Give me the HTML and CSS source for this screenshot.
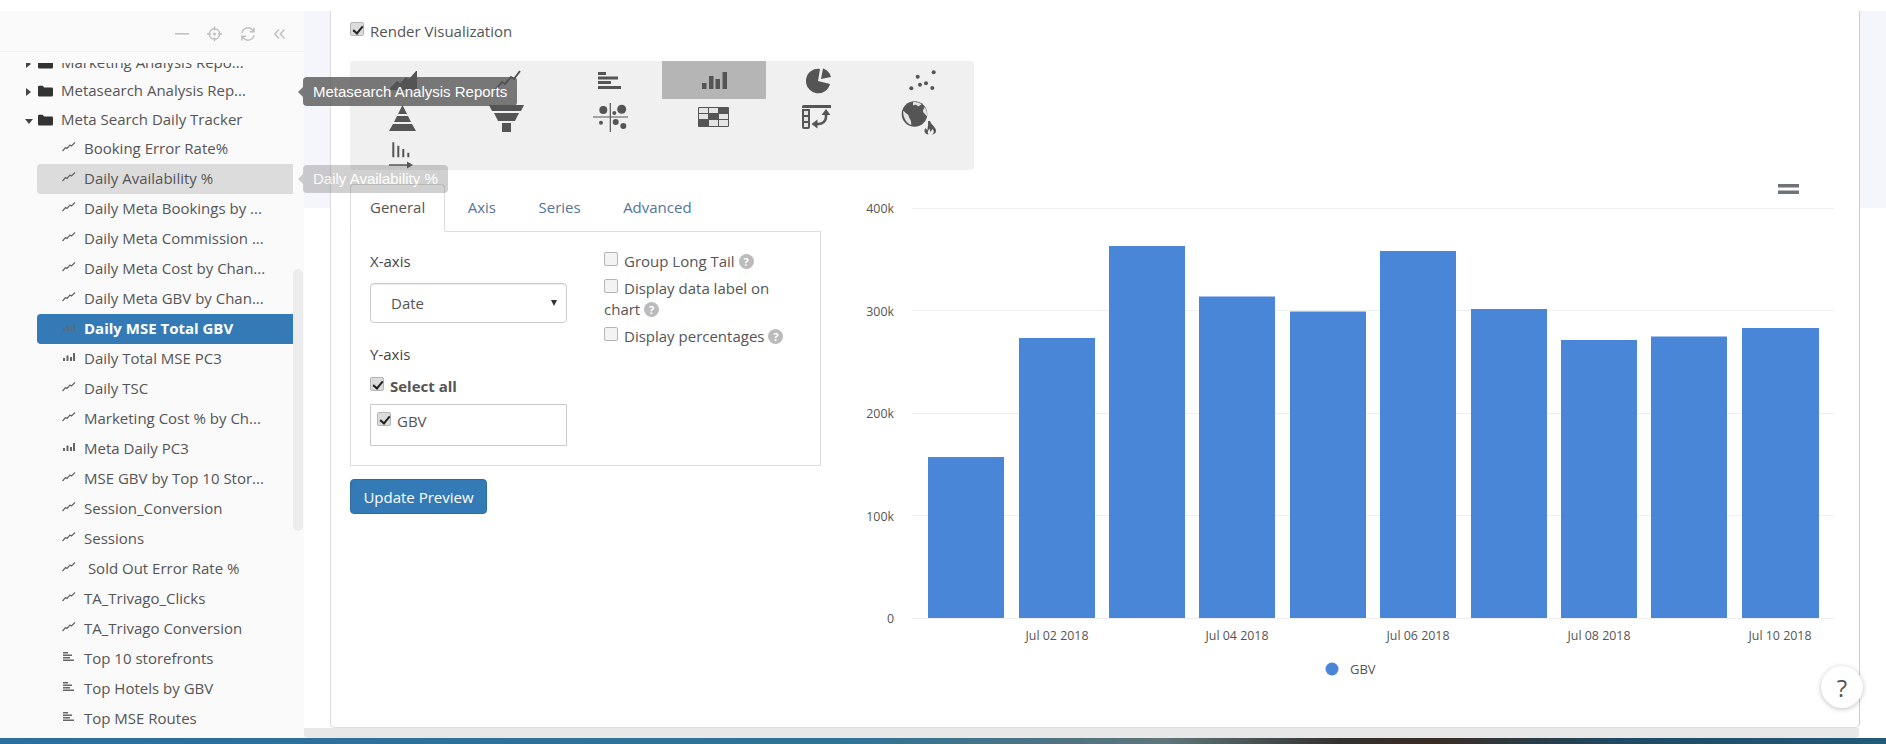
FILE: index.html
```html
<!DOCTYPE html>
<html lang="en">
<head>
  <meta charset="UTF-8">
  <title>Chart Editor</title>
  <link rel="stylesheet" href="styles.css">
</head>
<body>
  <svg class="defs" width="0" height="0">
    <symbol id="i-line" viewBox="0 0 14 10"><polyline points="0.5,9 3.5,5.5 5,6.5 8,3 9.5,4 13,0.5" fill="none" stroke="#666" stroke-width="1.2"/></symbol>
    <symbol id="i-bar" viewBox="0 0 14 10"><path d="M1 6h2v3H1zM4.500 3.500h2V9h-2zM8 5h2v4H8zM11 1h2v8h-2z" fill="#666"/></symbol>
    <symbol id="i-hbar" viewBox="0 0 14 10"><path d="M1 0h5v1.400H1zM1 2.500h9v1.400H1zM1 5h7v1.400H1zM1 7.500h11v1.400H1z" fill="#666"/></symbol>
    <symbol id="i-folder" viewBox="0 0 15 12"><path d="M0 2a1.300 1.300 0 0 1 1.300-1.300h3.400L6.200 2.400h7.500A1.300 1.300 0 0 1 15 3.700v6.600a1.300 1.300 0 0 1-1.300 1.300H1.300A1.300 1.300 0 0 1 0 10.300z" fill="#333"/></symbol>
  </svg>

  <div class="app">
    <aside class="sidebar">
      <div class="sidebar-head">
        <svg width="14" height="16" viewBox="0 0 14 16"><rect x="0" y="7" width="14" height="1.600" fill="#c0c0c0"/></svg>
        <svg width="15" height="16" viewBox="0 0 15 16" fill="none" stroke="#c0c0c0" stroke-width="1.400"><circle cx="7.500" cy="8" r="5.200"/><path d="M7.500 0.500v4M7.500 11.500v4M0 8h4M11 8h4"/><circle cx="7.500" cy="8" r="0.800" fill="#c0c0c0"/></svg>
        <svg width="16" height="16" viewBox="0 0 16 16" fill="none" stroke="#c0c0c0" stroke-width="1.500"><path d="M2 7a6 6 0 0 1 10.500-3l1.500 1.500"/><path d="M14 1.500v4.200h-4.200"/><path d="M14 9a6 6 0 0 1-10.500 3L2 10.500"/><path d="M2 14.500v-4.200h4.200"/></svg>
        <svg width="11" height="16" viewBox="0 0 11 16" fill="none" stroke="#c0c0c0" stroke-width="1.500"><path d="M5 3.500L0.800 8 5 12.500M10.500 3.500L6.300 8l4.200 4.500"/></svg>
      </div>
      <div class="tree-wrap">
        <ul class="tree">
          <li class="folder"><span class="caret caret-right"></span><svg class="folder-icon"><use href="#i-folder"/></svg>Marketing Analysis Repo...</li>
          <li class="folder"><span class="caret caret-right"></span><svg class="folder-icon"><use href="#i-folder"/></svg>Metasearch Analysis Rep...</li>
          <li class="folder"><span class="caret caret-down"></span><svg class="folder-icon"><use href="#i-folder"/></svg>Meta Search Daily Tracker</li>
          <li class="item"><svg class="item-icon"><use href="#i-line"/></svg>Booking Error Rate%</li>
          <li class="item hovered"><svg class="item-icon"><use href="#i-line"/></svg>Daily Availability %</li>
          <li class="item"><svg class="item-icon"><use href="#i-line"/></svg>Daily Meta Bookings by ...</li>
          <li class="item"><svg class="item-icon"><use href="#i-line"/></svg>Daily Meta Commission ...</li>
          <li class="item"><svg class="item-icon"><use href="#i-line"/></svg>Daily Meta Cost by Chan...</li>
          <li class="item"><svg class="item-icon"><use href="#i-line"/></svg>Daily Meta GBV by Chan...</li>
          <li class="item selected"><svg class="item-icon"><use href="#i-bar"/></svg>Daily MSE Total GBV</li>
          <li class="item"><svg class="item-icon"><use href="#i-bar"/></svg>Daily Total MSE PC3</li>
          <li class="item"><svg class="item-icon"><use href="#i-line"/></svg>Daily TSC</li>
          <li class="item"><svg class="item-icon"><use href="#i-line"/></svg>Marketing Cost % by Ch...</li>
          <li class="item"><svg class="item-icon"><use href="#i-bar"/></svg>Meta Daily PC3</li>
          <li class="item"><svg class="item-icon"><use href="#i-line"/></svg>MSE GBV by Top 10 Stor...</li>
          <li class="item"><svg class="item-icon"><use href="#i-line"/></svg>Session_Conversion</li>
          <li class="item"><svg class="item-icon"><use href="#i-line"/></svg>Sessions</li>
          <li class="item"><svg class="item-icon"><use href="#i-line"/></svg>&nbsp;Sold Out Error Rate %</li>
          <li class="item"><svg class="item-icon"><use href="#i-line"/></svg>TA_Trivago_Clicks</li>
          <li class="item"><svg class="item-icon"><use href="#i-line"/></svg>TA_Trivago Conversion</li>
          <li class="item"><svg class="item-icon"><use href="#i-hbar"/></svg>Top 10 storefronts</li>
          <li class="item"><svg class="item-icon"><use href="#i-hbar"/></svg>Top Hotels by GBV</li>
          <li class="item"><svg class="item-icon"><use href="#i-hbar"/></svg>Top MSE Routes</li>
        </ul>
        <div class="tree-scroll"></div>
      </div>
    </aside>

    <div class="workspace">
      <div class="workspace-row">
        <div class="gutter"></div>
        <main class="panel">
          <label class="render-row"><input type="checkbox" class="check" checked>Render Visualization</label>

          <div class="picker">
            <div class="cell"><svg viewBox="0 0 104 38"><polygon points="40,29 40,27 47,20 50,22 56,16 59,18 66,10 67,10 67,29"/></svg></div>
            <div class="cell"><svg viewBox="0 0 104 38"><polyline class="stroke" points="41,29 48,21 51,23 57,16 60,18 66,10"/></svg></div>
            <div class="cell"><svg viewBox="0 0 104 38"><path d="M40 11h8v3h-8zM40 15.500h20v3H40zM40 20h13v3H40zM40 25h23v3H40z"/></svg></div>
            <div class="cell active"><svg viewBox="0 0 104 38"><path d="M40 22h4.500v6H40zM47 15h4.500v13H47zM53.500 18H58v10h-4.500zM60.500 11H65v17h-4.500z"/></svg></div>
            <div class="cell"><svg viewBox="0 0 104 38"><path d="M52 20L54 8A12.200 12.200 0 1 0 64 23Z"/><path d="M55 18L57 7.500A12 12 0 0 1 65 16Z"/></svg></div>
            <div class="cell"><svg viewBox="0 0 104 38"><circle cx="47.700" cy="15.700" r="2"/><circle cx="63.700" cy="11.300" r="2"/><circle cx="41.300" cy="27.300" r="2"/><circle cx="50" cy="23.700" r="2"/><circle cx="56" cy="22.300" r="2"/><circle cx="62.300" cy="27" r="2"/></svg></div>

            <div class="cell"><svg viewBox="0 0 104 38"><path d="M52.500 6L57 15H48ZM47 17H58L61 23H44ZM43 25H62L66 32H39Z"/></svg></div>
            <div class="cell"><svg viewBox="0 0 104 38"><path d="M35 6H70L67 12H38ZM40 14H65L61 22H44ZM48 24H57V33H48Z"/></svg></div>
            <div class="cell"><svg viewBox="0 0 104 38"><path d="M51.700 4h1.200v29h-1.200zM35 17.400h35v1.200H35z"/><circle cx="45.300" cy="11" r="4"/><circle cx="63.700" cy="10.300" r="4.500"/><circle cx="56.300" cy="14" r="2"/><circle cx="43" cy="23.700" r="2"/><circle cx="57.700" cy="23" r="3"/><circle cx="65.300" cy="27" r="3"/></svg></div>
            <div class="cell"><svg viewBox="0 0 104 38"><rect x="36" y="8" width="31" height="20" rx="1"/><path class="light" d="M37 9h9v5h-9zM47 9h9v5h-9zM37 15h9v5h-9zM57 15h9v5h-9zM47 21h9v6h-9zM57 21h9v6h-9z"/></svg></div>
            <div class="cell"><svg viewBox="0 0 104 38"><path d="M37.500 6H65v3H36V7.500A1.500 1.500 0 0 1 37.500 6zM36 10h8v18a2 2 0 0 1-2 2h-4a2 2 0 0 1-2-2z"/><path class="light" d="M38 12h4v4h-4zM38 18h4v4h-4zM38 24h4v4h-4z"/><path class="stroke arrow" d="M60 15v3a7 7 0 0 1-7 7h-2"/><path d="M60 10l4.500 6h-9zM45.500 25l6-4.500v9z"/></svg></div>
            <div class="cell"><svg viewBox="0 0 104 38"><circle cx="44.500" cy="15" r="12.800"/><path class="light" d="M43 3.200c3-.4 6 .2 8.500 2 -1.500.8-2 2-3.500 2-1 0-1-1.500-2-1.500-1.200 0-1.500.5-3 .5zM54.500 8c2 2.500 3 5.500 2.500 9-1 0-1.500-1.500-2.500-2.500-.8-.8-1.500-1-1.500-2.500 0-1.500 1-2 1.500-4zM33.200 12c.8-.2 1.300.8 2 1.500 1.500 1.500 2.800 1.500 3.300 3 .5 1.500 1 3 2 4.500 1 1.500.5 3 .8 5-4.500-1.500-8.500-7-8.100-14z"/><path d="M60 22c1 3 3 4 5 7 2 3 1 6-3 6.500 2-1 2.500-3 .5-5.500-1 1-1.500 2-1.500 3-1-1-1.500-2-1-3.500-2 1.500-3 3.500-1.500 6-4-.5-5-3.500-3-6.500.5 1 1 1.500 2 2 0-3 1-5 .5-9z"/></svg></div>

            <div class="cell"><svg viewBox="0 0 104 38"><path d="M42.300 5.300h2v15h-2zM47.300 8.700h2v11.600h-2zM52.300 12h2v8.300h-2zM57.300 15.700h2v4.600h-2zM39 27.200h18v1.600H39zM57 24.500l6 3.500-6 3.500z"/></svg></div>
          </div>

          <div class="editor">
            <div class="options">
              <div class="tabs">
                <a class="tab active">General</a>
                <a class="tab">Axis</a>
                <a class="tab">Series</a>
                <a class="tab">Advanced</a>
              </div>
              <div class="tab-body">
                <div class="col-left">
                  <div class="field-label">X-axis</div>
                  <div class="select-wrap">
                    <select class="select"><option>Date</option></select>
                  </div>
                  <div class="field-label y-label">Y-axis</div>
                  <label class="select-all"><input type="checkbox" class="check" checked>Select all</label>
                  <div class="series-box">
                    <label><input type="checkbox" class="check" checked>GBV</label>
                  </div>
                </div>
                <div class="col-right">
                  <label class="opt"><input type="checkbox" class="check">Group Long Tail <span class="help">?</span></label>
                  <label class="opt"><input type="checkbox" class="check">Display data label on chart <span class="help">?</span></label>
                  <label class="opt"><input type="checkbox" class="check">Display percentages <span class="help">?</span></label>
                </div>
              </div>
              <button class="update-btn">Update Preview</button>
            </div>

            <div class="chart">
              <svg width="1010" height="510" viewBox="0 0 1010 510">
                <path class="menu" d="M938 0h21v3.500h-21zM938 6.500h21V10h-21z"/>
                <g class="grid">
                  <path d="M72 24.500h922M72 126.500h922M72 229.500h922M72 331.500h922M72 434.500h922"/>
                </g>
                <g class="y-labels">
                  <text x="54" y="29">400k</text>
                  <text x="54" y="132">300k</text>
                  <text x="54" y="234">200k</text>
                  <text x="54" y="337">100k</text>
                  <text x="54" y="439">0</text>
                </g>
                <g class="bars">
                  <rect x="88" y="273" width="76" height="161"/>
                  <rect x="179" y="154" width="76" height="280"/>
                  <rect x="269" y="62" width="76" height="372"/>
                  <rect x="359" y="112.500" width="76" height="321.500"/>
                  <rect x="450" y="127.500" width="76" height="306.500"/>
                  <rect x="540" y="67" width="76" height="367"/>
                  <rect x="631" y="125" width="76" height="309"/>
                  <rect x="721" y="156" width="76" height="278"/>
                  <rect x="811" y="152.500" width="76" height="281.500"/>
                  <rect x="902" y="144" width="77" height="290"/>
                </g>
                <g class="x-labels">
                  <text x="217" y="456">Jul 02 2018</text>
                  <text x="397" y="456">Jul 04 2018</text>
                  <text x="578" y="456">Jul 06 2018</text>
                  <text x="759" y="456">Jul 08 2018</text>
                  <text x="940" y="456">Jul 10 2018</text>
                </g>
                <circle cx="492" cy="485" r="6.500" fill="#4a86d8"/>
                <text class="legend" x="510" y="490">GBV</text>
              </svg>
            </div>
          </div>
        </main>
        <div class="gutter gutter-right"></div>
      </div>
      <div class="hscroll"></div>
    </div>
  </div>
  <div class="desktop-strip"></div>

  <div class="tooltip tip-report">Metasearch Analysis Reports</div>
  <div class="tooltip tip-item">Daily Availability %</div>
  <button class="help-btn">?</button>
</body>
</html>
```

FILE: styles.css
```css
* {
  box-sizing: border-box;
}

html, body {
  margin: 0;
  padding: 0;
  height: 744px;
  overflow: hidden;
}

body {
  font-family: "Open Sans", Arial, sans-serif;
  font-size: 15px;
  color: #555;
  background-color: #fff;
}

.defs {
  position: absolute;
}

.app {
  display: flex;
  height: 738px;
  padding-top: 11px;
}

/* sidebar */
.sidebar {
  width: 304px;
  flex: none;
  display: flex;
  flex-direction: column;
  background-color: #fafafa;
}

.sidebar-head {
  height: 41px;
  flex: none;
  display: flex;
  justify-content: flex-end;
  align-items: center;
  gap: 18px;
  padding: 6px 19px 0 0;
  border-bottom: 1px solid #efefef;
}

.tree-wrap {
  position: relative;
  flex: 1;
  margin-top: 11px;
  overflow: hidden;
}

.tree {
  list-style: none;
  margin: -14.5px 0 0;
  padding: 0;
}

.folder {
  position: relative;
  height: 28.5px;
  line-height: 27px;
  padding-left: 61px;
  white-space: nowrap;
}

.caret {
  position: absolute;
  top: 11px;
  width: 0;
  height: 0;
  border-style: solid;
}

.caret-right {
  left: 26px;
  border-width: 4px 0 4px 5px;
  border-color: transparent transparent transparent #444;
}

.caret-down {
  left: 25px;
  top: 13px;
  border-width: 5px 4px 0 4px;
  border-color: #444 transparent transparent transparent;
}

.folder-icon {
  position: absolute;
  left: 38px;
  top: 8px;
  width: 15px;
  height: 12px;
}

.item {
  position: relative;
  width: 256px;
  height: 30px;
  line-height: 28px;
  margin-left: 37px;
  padding-left: 47px;
  border-radius: 4px 0 0 4px;
  white-space: nowrap;
}

.item-icon {
  position: absolute;
  left: 25px;
  top: 8px;
  width: 14px;
  height: 10px;
}

.item.hovered {
  background-color: #dcdcdc;
}

.item.selected {
  background-color: #337ab7;
  color: #fff;
  font-weight: 700;
}

.item.selected .item-icon {
  opacity: 0.75;
}

.tree-scroll {
  position: absolute;
  left: 293px;
  top: 206px;
  width: 10px;
  height: 262px;
  border-radius: 5px;
  background-color: #ececec;
}

/* main area */
.workspace {
  flex: 1;
  min-width: 0;
  display: flex;
  flex-direction: column;
}

.workspace-row {
  flex: 1;
  min-height: 0;
  display: flex;
}

.gutter {
  width: 26px;
  height: 197px;
  flex: none;
  background-color: #f5f6fb;
}

.panel {
  flex: 1;
  min-width: 0;
  padding: 10px 0 0 19px;
  background-color: #fff;
  border-left: 1px solid #ddd;
  border-right: 1px solid #ccc;
  border-bottom: 1px solid #ddd;
  border-radius: 0 0 5px 5px;
}

.hscroll {
  width: 1555px;
  height: 10px;
  flex: none;
  background-color: #e8e8e8;
  border-radius: 0 0 4px 4px;
}

.render-row {
  display: flex;
  align-items: center;
  height: 20px;
  margin-bottom: 20px;
}

.check {
  appearance: none;
  -webkit-appearance: none;
  position: relative;
  display: inline-block;
  width: 14px;
  height: 14px;
  margin: 0 6px 0 0;
  background-color: #f3f3f3;
  border: 1px solid #b5b5b5;
  border-radius: 2px;
  vertical-align: 1px;
  flex: none;
}

.check:checked {
  background-color: #dcdcdc;
}

.check:checked::after {
  content: "";
  position: absolute;
  left: 4px;
  top: 1px;
  width: 4px;
  height: 8px;
  border: solid #222;
  border-width: 0 2px 2px 0;
  transform: rotate(40deg);
}

.render-row .check {
  margin-top: -5px;
}

/* chart type picker */
.picker {
  display: grid;
  grid-template-columns: repeat(6, 104px);
  grid-template-rows: 38px 38px 33px;
  width: 624px;
  margin-bottom: 14px;
  background-color: #f0f0f0;
  border-radius: 4px;
}

.cell svg {
  display: block;
  width: 104px;
  height: 38px;
  overflow: visible;
  fill: #555;
}

.cell.active {
  background-color: #b5b5b5;
}

.cell .stroke {
  fill: none;
  stroke: #555;
  stroke-width: 2;
}

.cell .arrow {
  stroke-width: 2.6;
}

.cell .light {
  fill: #e4e4e4;
}

/* editor */
.editor {
  display: flex;
  gap: 19px;
}

.options {
  width: 471px;
  flex: none;
}

.tabs {
  position: relative;
  display: flex;
  height: 48px;
  margin-bottom: -1px;
}

.tab {
  height: 48px;
  line-height: 45px;
  padding: 0 19px;
  margin-right: 2.5px;
  border: 1px solid transparent;
  color: #54759b;
}

.tab.active {
  color: #555;
  background-color: #fff;
  border-color: #ddd #ddd #fff;
  border-radius: 4px 4px 0 0;
}

.tab-body {
  display: flex;
  gap: 37px;
  padding: 19px;
  border: 1px solid #ddd;
}

.col-left {
  width: 197px;
  flex: none;
}

.col-right {
  flex: 1;
  line-height: 21px;
}

.field-label {
  line-height: 20px;
  color: #444;
}

.y-label {
  margin-top: 21px;
}

.select-wrap {
  position: relative;
  margin-top: 12px;
}

.select-wrap::after {
  content: "";
  position: absolute;
  right: 10px;
  top: 17px;
  border-style: solid;
  border-width: 6px 3.5px 0;
  border-color: #333 transparent transparent;
}

.select {
  appearance: none;
  -webkit-appearance: none;
  display: block;
  width: 197px;
  height: 40px;
  padding: 0 20px;
  background-color: #fff;
  border: 1px solid #ccc;
  border-radius: 4px;
  box-shadow: inset 0 1px 1px rgba(0, 0, 0, 0.08);
  font: inherit;
  color: #555;
}

.select-all {
  display: block;
  margin-top: 12px;
  line-height: 20px;
  font-weight: 700;
}

.series-box {
  height: 42px;
  margin-top: 8px;
  padding: 6px;
  border: 1px solid #ccc;
  line-height: 20px;
}

.opt {
  display: block;
  margin-bottom: 6px;
}

.help {
  display: inline-block;
  width: 15px;
  height: 15px;
  line-height: 15px;
  border-radius: 50%;
  background-color: #bbb;
  color: #fff;
  font-size: 11px;
  font-weight: 700;
  text-align: center;
  vertical-align: 1px;
}

.update-btn {
  display: block;
  width: 137px;
  height: 35px;
  margin-top: 13px;
  padding: 0;
  background-color: #337ab7;
  border: 1px solid #2e6da4;
  border-radius: 4px;
  color: #fff;
  font: inherit;
}

/* chart */
.chart svg {
  display: block;
}

.menu {
  fill: #6e7378;
}

.grid path {
  fill: none;
  stroke: #efefef;
  stroke-width: 1;
}

.bars rect {
  fill: #4a86d8;
}

.y-labels text {
  font-size: 12.4px;
  fill: #555;
  text-anchor: end;
}

.x-labels text {
  font-size: 12.4px;
  fill: #555;
  text-anchor: middle;
}

.legend {
  font-size: 13px;
  fill: #555;
}

/* overlays */
.desktop-strip {
  height: 6px;
  background: linear-gradient(90deg, #2a6f9f 0%, #2f7396 45%, #5f7478 62%, #33312f 71%, #3a2c25 76%, #1f4a63 86%, #235a7a 100%);
}

.tooltip {
  position: absolute;
  left: 303px;
  padding: 0 10px;
  font-family: "Liberation Sans", Arial, sans-serif;
  font-size: 15px;
  color: #fff;
  white-space: nowrap;
  border-radius: 4px;
  background-color: rgba(85, 85, 85, 0.78);
}

.tooltip::before {
  content: "";
  position: absolute;
  left: -5px;
  top: 50%;
  margin-top: -5px;
  border-style: solid;
  border-width: 5px 5px 5px 0;
  border-color: transparent rgba(85, 85, 85, 0.78) transparent transparent;
}

.tip-report {
  top: 77px;
  height: 29px;
  line-height: 29px;
}

.tip-item {
  top: 165px;
  height: 28px;
  line-height: 28px;
  opacity: 0.35;
}

.help-btn {
  position: absolute;
  left: 1821px;
  top: 666px;
  width: 42px;
  height: 42px;
  padding: 0;
  border: none;
  border-radius: 50%;
  background-color: #fff;
  box-shadow: 0 1px 5px rgba(0, 0, 0, 0.25);
  font-family: "Open Sans", Arial, sans-serif;
  font-size: 24px;
  color: #555;
}
```
